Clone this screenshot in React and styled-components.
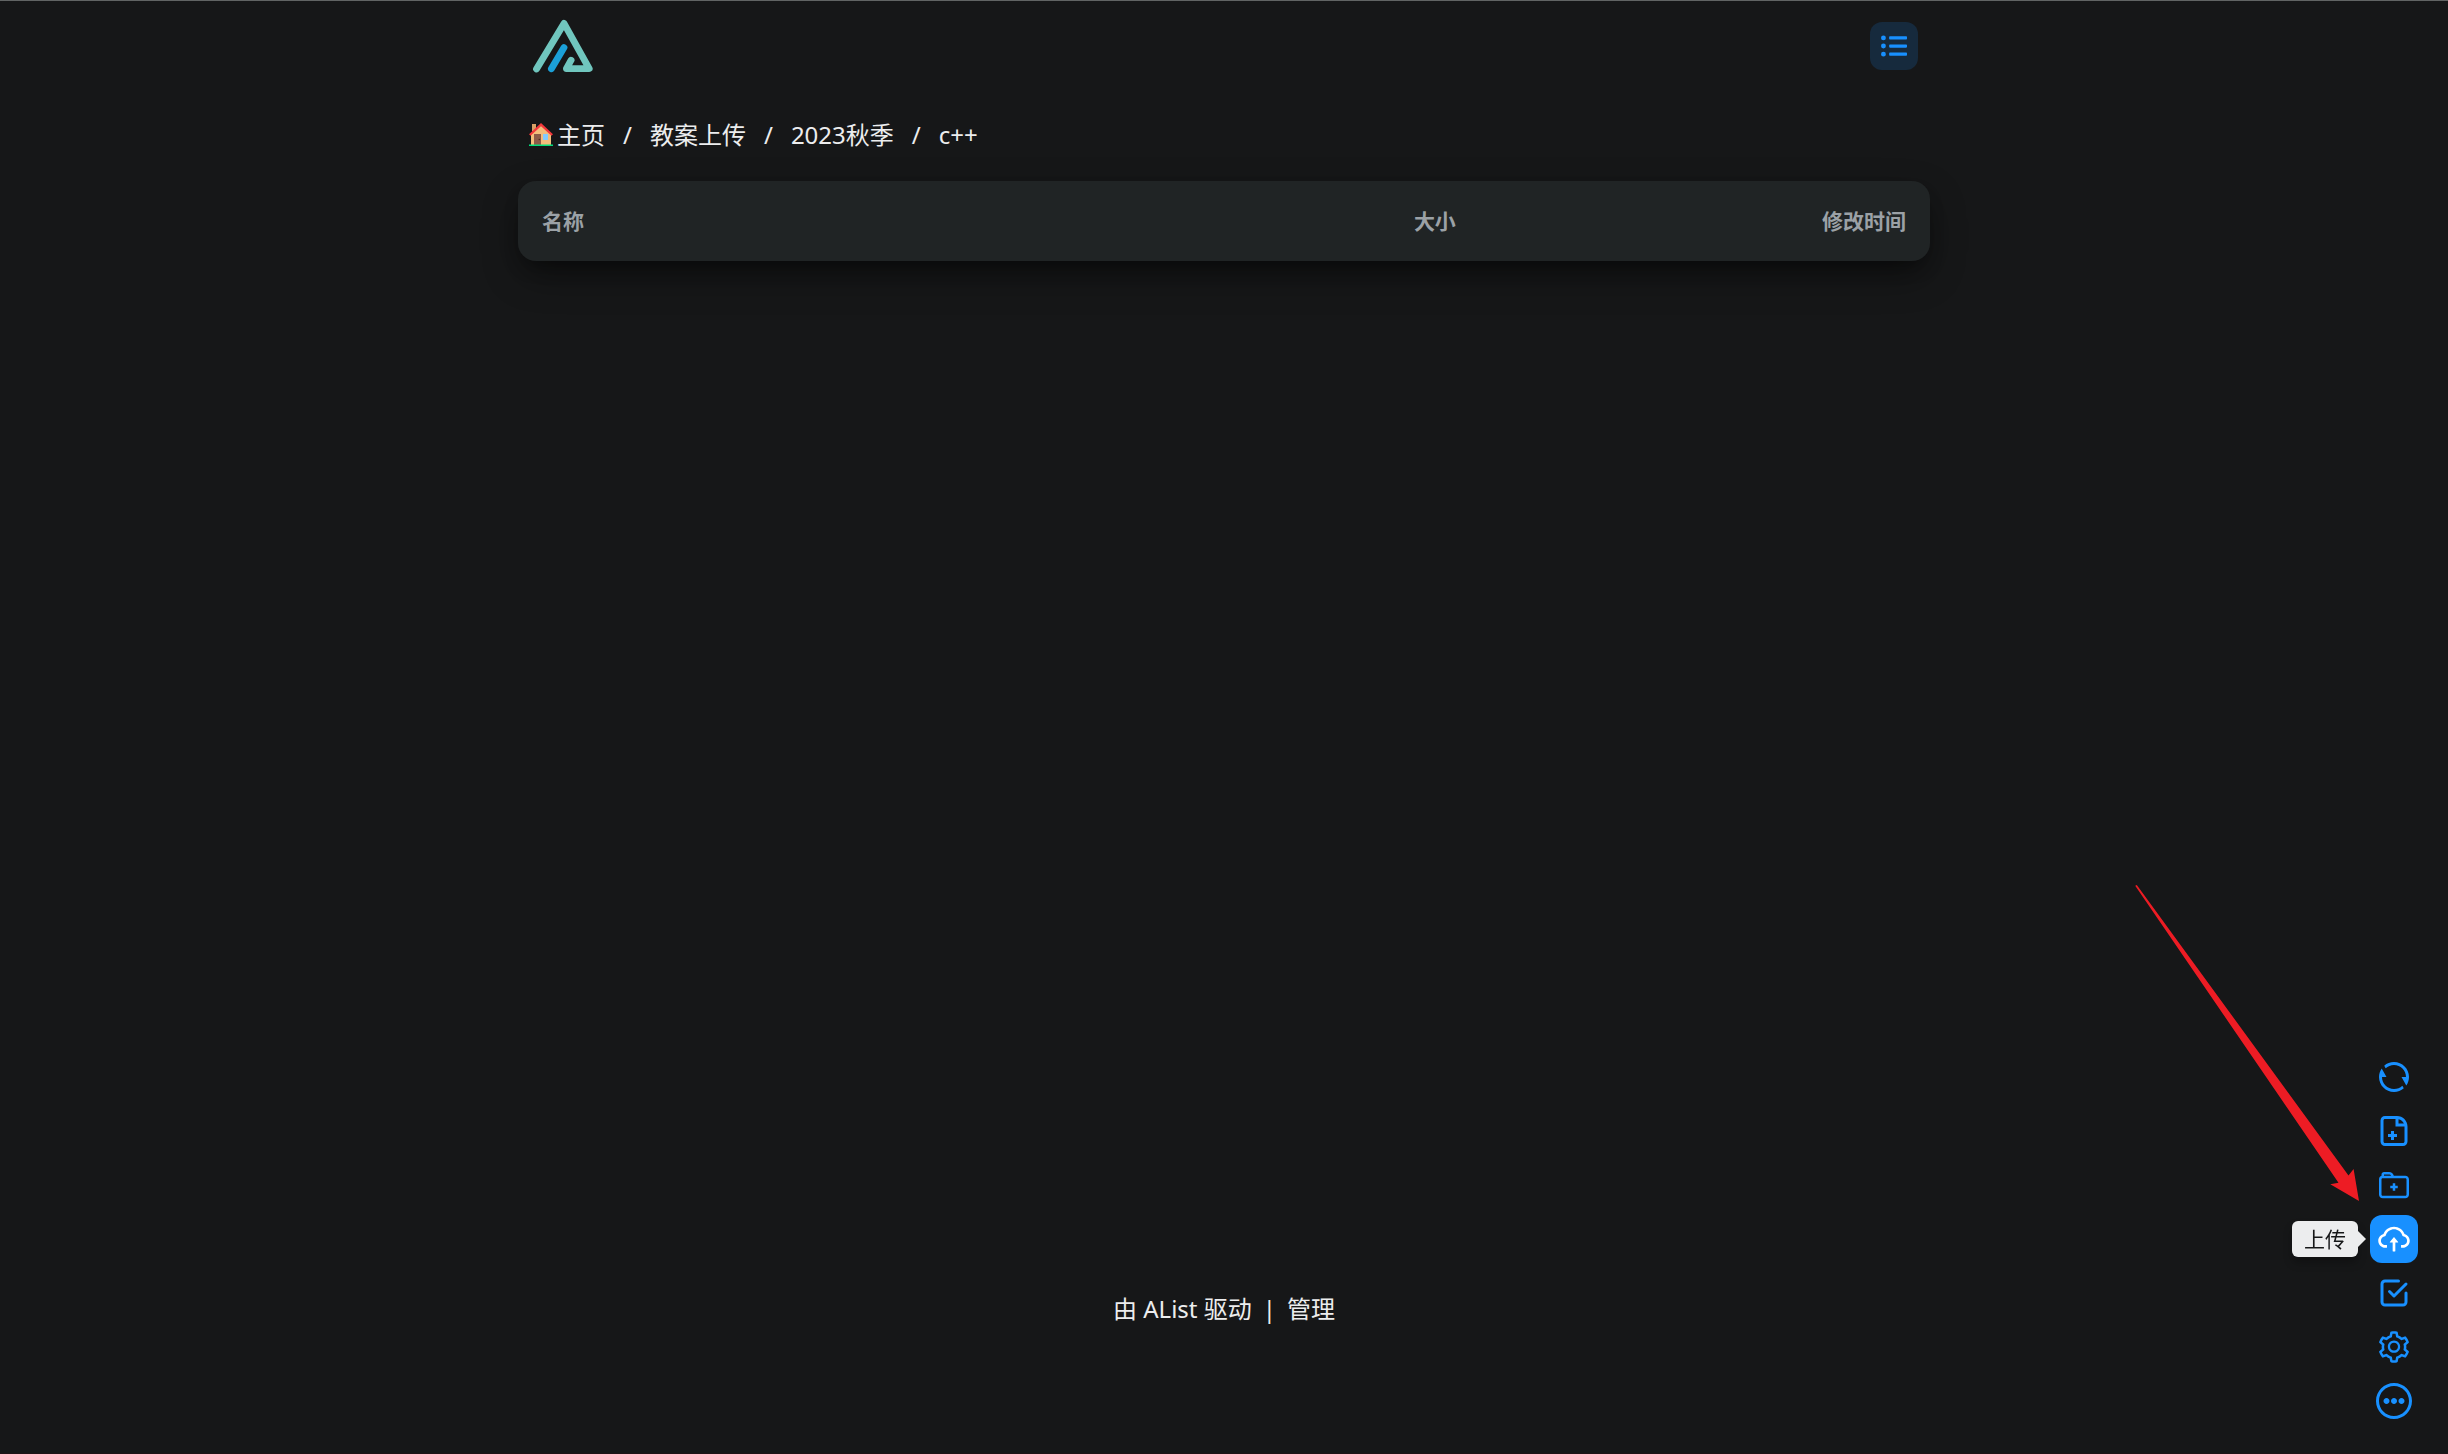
import React from "react";
import styled, { createGlobalStyle } from "styled-components";
import { FaListUl } from "react-icons/fa";
import { RiRefreshLine } from "react-icons/ri";
import { CgFileAdd, CgFolderAdd, CgMoreO } from "react-icons/cg";
import { AiOutlineCloudUpload, AiOutlineSetting } from "react-icons/ai";
import { TbCheckbox } from "react-icons/tb";

const GlobalStyle = createGlobalStyle`
  *, *::before, *::after { box-sizing: border-box; }
  body {
    margin: 0;
    background: #161718;
    color: #ecedee;
    font-family: "Noto Sans", "Noto Sans CJK SC", sans-serif;
    font-size: 24px;
    line-height: 36px;
  }
  a { color: inherit; text-decoration: none; }
`;

const Page = styled.div`
  min-height: 100vh;
  display: flex;
  flex-direction: column;
  align-items: center;
  border-top: 1px solid #616464;
  border-bottom: 1px solid #1e1416;
`;

const Container = styled.div`
  width: calc(100% - 24px);
  max-width: 1412px;
`;

const Header = styled.header`
  display: flex;
  align-items: center;
  justify-content: space-between;
  height: 90px;
  padding: 0 12px 0 15px;
`;

const LogoLink = styled.a`
  display: flex;
`;

const LayoutButton = styled.button`
  width: 48px;
  height: 48px;
  display: grid;
  place-items: center;
  padding: 0;
  border: 0;
  border-radius: 12px;
  background: #162a3d;
  color: #1890ff;
  cursor: pointer;
`;

const Breadcrumb = styled.nav`
  display: flex;
  align-items: center;
  gap: 18px;
  padding: 26px 11px 28px;
`;

const Crumb = styled.a`
  display: flex;
  align-items: center;
  gap: 4px;
`;

const Card = styled.main`
  padding: 24px;
  border-radius: 18px;
  background: #202425;
  box-shadow: 0 15px 38px -4px rgba(0, 0, 0, 0.45), 0 10px 20px -8px rgba(0, 0, 0, 0.4);
`;

const FileTable = styled.table`
  width: 100%;
  table-layout: fixed;
  border-collapse: collapse;
`;

const HeadCell = styled.th`
  width: ${(p) => p.$width};
  padding: 0;
  text-align: ${(p) => p.$align || "right"};
  font-size: 21px;
  line-height: 32px;
  font-weight: 700;
  color: #9ba1a6;
`;

const Footer = styled.footer`
  display: flex;
  gap: 11px;
  margin-top: auto;
  padding: 24px 0 126px;
`;

const Toolbar = styled.aside`
  position: fixed;
  right: 30px;
  bottom: 29px;
  display: flex;
  flex-direction: column;
  gap: 6px;
`;

const ToolItem = styled.div`
  position: relative;
`;

const ToolButton = styled.button`
  width: 48px;
  height: 48px;
  display: grid;
  place-items: center;
  padding: 0;
  border: 0;
  border-radius: 12px;
  background: ${(p) => (p.$active ? "#1890ff" : "transparent")};
  color: ${(p) => (p.$active ? "#ffffff" : "#1890ff")};
  cursor: pointer;
`;

const Tooltip = styled.span`
  position: absolute;
  top: 6px;
  right: 60px;
  padding: 0 12px;
  border-radius: 6px;
  background: #ecedee;
  color: #161718;
  font-size: 21px;
  line-height: 36px;
  white-space: nowrap;
  box-shadow: 0 6px 9px rgba(0, 0, 0, 0.25);

  &::after {
    content: "";
    position: absolute;
    left: 100%;
    top: 10px;
    border: 8px solid transparent;
    border-left-color: #ecedee;
    border-right-width: 0;
  }
`;

const Pointer = styled.svg`
  position: fixed;
  right: 88px;
  bottom: 252px;
  pointer-events: none;
`;

const Logo = () => (
  <svg width="62" height="54" viewBox="0 0 62 54" fill="none" strokeWidth="6.8" strokeLinecap="round" strokeLinejoin="round" aria-hidden="true">
    <path d="M3.5 50L31 4.4L56.2 49.6H33.4L38.1 41.2" stroke="#70c6be" />
    <path d="M18.4 49.8L31 28.6" stroke="#1ba0d8" />
  </svg>
);

const House = () => (
  <svg width="24" height="24" viewBox="0 0 24 24" aria-hidden="true">
    <path d="M3 1H7V8H3z" fill="#d9a066" />
    <path d="M2 11L12 1.5L22 11V22H2z" fill="#f3bd7c" />
    <path d="M5 11H12V22H5z" fill="#8d5a48" />
    <circle cx="10.3" cy="16.5" r="0.8" fill="#4d2b24" />
    <path d="M14 11H19V17H14z" fill="#83cbff" />
    <path d="M0.8 12L12 1.6L23.2 12" fill="none" stroke="#f4373b" strokeWidth="2.3" />
    <path d="M0 21.5H24V23H0z" fill="#00df7c" />
  </svg>
);

const crumbs = ["主页", "教案上传", "2023秋季", "c++"];

const tools = [
  { label: "刷新", Icon: RiRefreshLine },
  { label: "新建文件", Icon: CgFileAdd },
  { label: "新建文件夹", Icon: CgFolderAdd, size: 30 },
  { label: "上传", Icon: AiOutlineCloudUpload, active: true },
  { label: "多选", Icon: TbCheckbox },
  { label: "本地设置", Icon: AiOutlineSetting },
  { label: "更多", Icon: CgMoreO },
];

export default function App() {
  return (
    <>
      <GlobalStyle />
      <Page>
        <Container>
          <Header>
            <LogoLink href="#" aria-label="AList">
              <Logo />
            </LogoLink>
            <LayoutButton type="button" aria-label="列表视图">
              <FaListUl size={26} />
            </LayoutButton>
          </Header>
          <Breadcrumb>
            {crumbs.map((name, i) => (
              <React.Fragment key={name}>
                {i > 0 && <span>/</span>}
                <Crumb href="#">
                  {i === 0 && <House />}
                  {name}
                </Crumb>
              </React.Fragment>
            ))}
          </Breadcrumb>
          <Card>
            <FileTable>
              <thead>
                <tr>
                  <HeadCell $width="50%" $align="left">名称</HeadCell>
                  <HeadCell $width="17%">大小</HeadCell>
                  <HeadCell $width="33%">修改时间</HeadCell>
                </tr>
              </thead>
            </FileTable>
          </Card>
        </Container>
        <Footer>
          <a href="#">由 AList 驱动</a>
          <span>|</span>
          <a href="#">管理</a>
        </Footer>
      </Page>
      <Toolbar>
        {tools.map(({ label, Icon, active, size = 36 }) => (
          <ToolItem key={label}>
            <ToolButton type="button" $active={active} aria-label={label}>
              <Icon size={size} />
            </ToolButton>
            {active && <Tooltip role="tooltip">{label}</Tooltip>}
          </ToolItem>
        ))}
      </Toolbar>
      <Pointer width="226" height="318" viewBox="0 0 226 318" aria-hidden="true">
        <path d="M1.2 1.8L2.8 1L214.5 291.5L219.6 285L225 317L196.3 300.3L204.5 298.7z" fill="#ed1c24" />
      </Pointer>
    </>
  );
}
